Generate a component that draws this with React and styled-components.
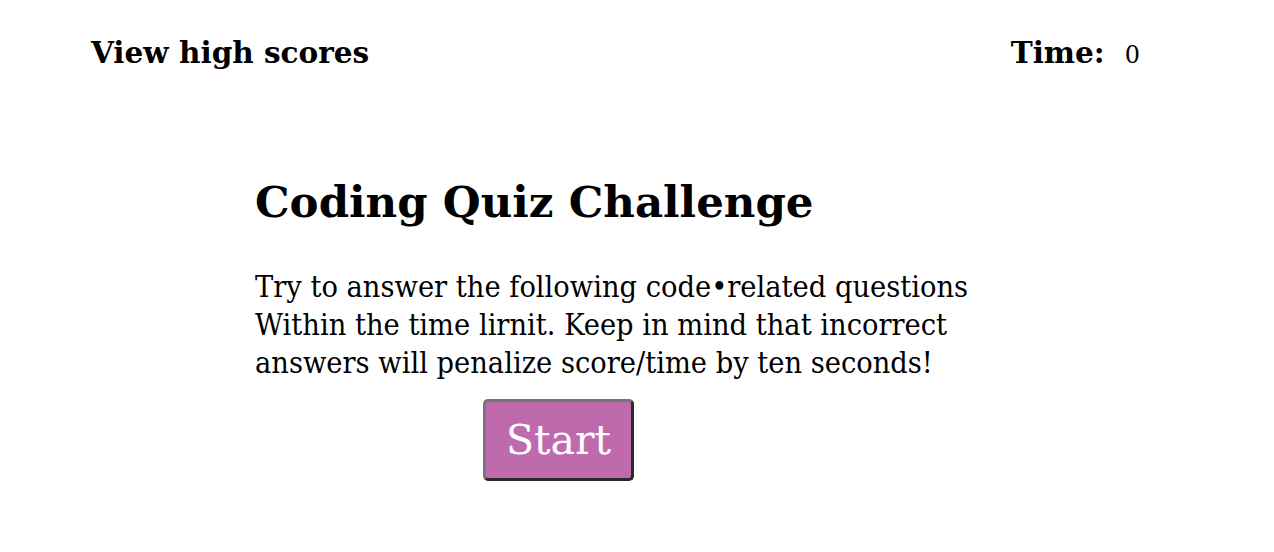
import React from 'react';
import styled, { createGlobalStyle } from 'styled-components';

const GlobalStyle = createGlobalStyle`
  body {
    margin: 0;
    background: #ffffff;
    font-family: 'DejaVu Serif', Georgia, serif;
    color: #000000;
  }
`;

const Header = styled.header`
  display: flex;
  justify-content: space-between;
  align-items: baseline;
  padding: 35px 134px 0 91px;
`;

const HighScores = styled.a`
  font-size: 29.5px;
  font-weight: bold;
  color: #000000;
  text-decoration: none;
`;

const Timer = styled.div`
  display: flex;
  align-items: baseline;
  gap: 20px;
`;

const TimeLabel = styled.span`
  font-size: 29.5px;
  font-weight: bold;
`;

const TimeValue = styled.span`
  font-size: 24px;
`;

const Main = styled.main`
  padding: 106px 0 0 255px;
  width: 780px;
`;

const Title = styled.h1`
  margin: 0;
  font-size: 43.5px;
  font-weight: bold;
  line-height: 1.2;
`;

const Intro = styled.p`
  margin: 40px 0 0;
  font-family: 'DejaVu Serif Condensed', 'DejaVu Serif', serif;
  font-stretch: condensed;
  font-size: 30.4px;
  line-height: 38px;
`;

const StartButton = styled.button`
  display: block;
  margin: 17px 0 0 228px;
  width: 151px;
  height: 82px;
  background: #c06aae;
  color: #ffffff;
  font-family: 'DejaVu Serif', Georgia, serif;
  font-size: 41px;
  border: 3px solid;
  border-color: #767676 #2a2a2a #2a2a2a #767676;
  border-radius: 5px;
  padding: 0;
`;

export default function App() {
  return (
    <>
      <GlobalStyle />
      <Header>
        <HighScores href="#">View high scores</HighScores>
        <Timer>
          <TimeLabel>Time:</TimeLabel>
          <TimeValue>0</TimeValue>
        </Timer>
      </Header>
      <Main>
        <Title>Coding Quiz Challenge</Title>
        <Intro>
          Try to answer the following code•related questions
          <br />
          Within the time lirnit. Keep in mind that incorrect
          <br />
          answers will penalize score/time by ten seconds!
        </Intro>
        <StartButton>Start</StartButton>
      </Main>
    </>
  );
}
